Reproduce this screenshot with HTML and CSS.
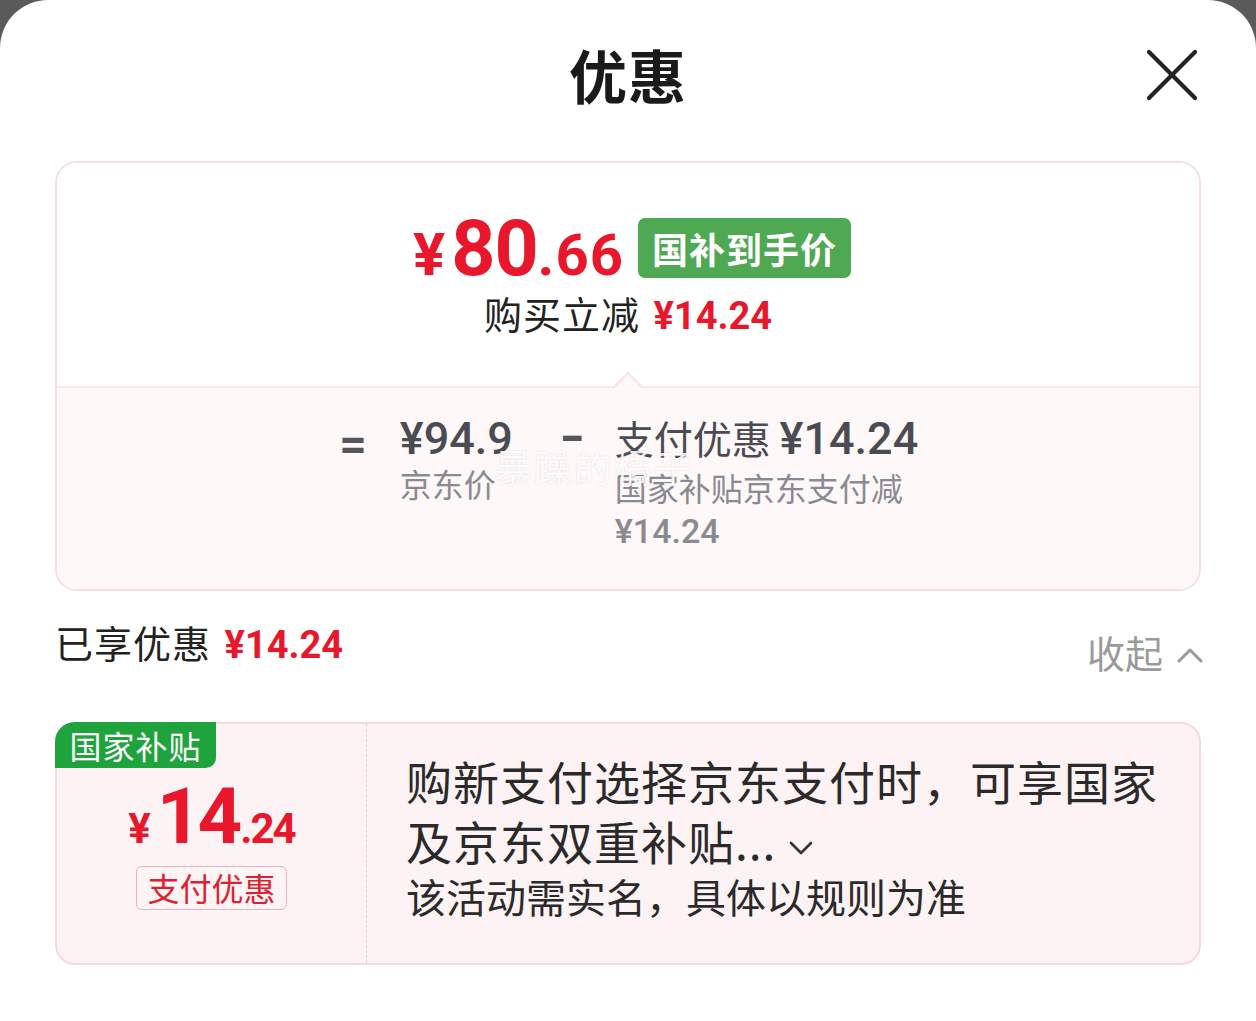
FILE: index.html
```html
<!DOCTYPE html>
<html lang="zh-CN">
<head>
    <meta charset="UTF-8">
    <meta name="viewport" content="width=device-width, initial-scale=1.0">
    <title>优惠</title>
    <link rel="stylesheet" href="styles.css">
</head>
<body>
    <div class="sheet">
        <header class="sheet-head">
            <h1>优惠</h1>
            <button class="close" aria-label="关闭">
                <svg width="52" height="52" viewBox="0 0 52 52"><path d="M3 3 L49 49 M49 3 L3 49" stroke="#222" stroke-width="4.2" stroke-linecap="round" fill="none"/></svg>
            </button>
        </header>

        <section class="summary">
            <div class="summary-top">
                <div class="final-row">
                    <span class="final-price"><span class="yen">¥</span><span class="int">80</span><span class="dec">.66</span></span>
                    <span class="badge-green">国补到手价</span>
                </div>
                <div class="reduce">购买立减 <span class="num red">¥14.24</span></div>
            </div>
            <div class="summary-bottom">
                <span class="notch"></span>
                <div class="formula">
                    <span class="op op-eq">=</span>
                    <div class="term">
                        <div class="term-title"><span class="num">¥94.9</span></div>
                        <div class="term-sub">京东价</div>
                    </div>
                    <span class="op op-minus">-</span>
                    <div class="term term-wide">
                        <div class="term-title">支付优惠 <span class="num">¥14.24</span></div>
                        <div class="term-sub">国家补贴京东支付减</div>
                        <div class="term-sub"><span class="num">¥14.24</span></div>
                    </div>
                </div>
                <span class="watermark">暴躁的橘子</span>
            </div>
        </section>

        <div class="enjoyed">
            <div class="enjoyed-left">已享优惠 <span class="num red">¥14.24</span></div>
            <div class="collapse">收起
                <svg width="26" height="18" viewBox="0 0 26 18"><path d="M2 15 L13 4 L24 15" stroke="#9a9a9a" stroke-width="3" fill="none" stroke-linecap="round" stroke-linejoin="round"/></svg>
            </div>
        </div>

        <section class="coupon">
            <span class="coupon-tag">国家补贴</span>
            <div class="coupon-left">
                <div class="coupon-price"><span class="c-yen">¥</span><span class="c-int">14</span><span class="c-dec">.24</span></div>
                <span class="coupon-type">支付优惠</span>
            </div>
            <div class="coupon-right">
                <p class="coupon-title">购新支付选择京东支付时，可享国家及京东双重补贴...<svg class="more" width="26" height="20" viewBox="0 0 26 20"><path d="M3 5 L13 15 L23 5" stroke="#333" stroke-width="2.6" fill="none" stroke-linecap="round" stroke-linejoin="round"/></svg></p>
                <p class="coupon-note">该活动需实名，具体以规则为准</p>
            </div>
        </section>
    </div>
</body>
</html>
```

FILE: styles.css
```css
/* Base */
* {
    box-sizing: border-box;
    margin: 0;
    padding: 0;
}

body {
    background: #5a5a5a;
    font-family: "Noto Sans CJK SC", "Noto Sans", sans-serif;
    color: #222;
}

.sheet {
    background: #fff;
    border-radius: 48px 48px 0 0;
    height: 1021px;
    padding: 0 55px;
    overflow: hidden;
}

.num {
    font-family: Roboto, "Noto Sans CJK SC", sans-serif;
    font-weight: 700;
}

.red {
    color: #e8172c;
}

/* Header */
.sheet-head {
    height: 150px;
    display: flex;
    align-items: center;
    justify-content: center;
    position: relative;
}

.sheet-head h1 {
    font-size: 58px;
    font-weight: 700;
    color: #1a1a1a;
    letter-spacing: 1px;
    margin-top: -2px;
}

.close {
    position: absolute;
    right: 3px;
    top: 49px;
    border: none;
    background: none;
    width: 52px;
    height: 52px;
}

/* Summary card */
.summary {
    margin-top: 11px;
    border: 2px solid #f8dde2;
    border-radius: 22px;
    overflow: hidden;
}

.summary-top {
    background: #fff;
    padding: 55px 0 47px;
    display: flex;
    flex-direction: column;
    align-items: center;
}

.final-row {
    display: flex;
    align-items: center;
    height: 60px;
    margin-left: 8px;
}

.final-price {
    font-family: Roboto, sans-serif;
    font-weight: 700;
    color: #e8172c;
    display: flex;
    align-items: baseline;
    margin-top: 2px;
}

.final-price .yen {
    font-size: 60px;
    margin-right: 6px;
}

.final-price .int {
    font-size: 77px;
    letter-spacing: -1px;
}

.final-price .dec {
    font-size: 58px;
    letter-spacing: 1px;
}

.badge-green {
    margin-left: 14px;
    background: #4fa852;
    color: #fff;
    font-size: 36px;
    font-weight: 700;
    border-radius: 7px;
    height: 60px;
    line-height: 60px;
    padding: 0 14px;
    letter-spacing: 1px;
}

.reduce {
    margin-top: 12px;
    font-size: 38px;
    line-height: 46px;
    letter-spacing: 1px;
    color: #222;
}

.reduce .num {
    font-size: 38px;
    letter-spacing: 0;
    margin-left: 4px;
}

.summary-bottom {
    position: relative;
    background: #fef8f8;
    border-top: 2px solid #fbe7ea;
    padding: 26px 0 37px;
}

.notch {
    position: absolute;
    left: 50%;
    top: -12px;
    width: 22px;
    height: 22px;
    margin-left: -11px;
    background: #fef8f8;
    border-top: 2px solid #fbe1e6;
    border-left: 2px solid #fbe1e6;
    transform: rotate(45deg);
}

.formula {
    display: flex;
    justify-content: center;
    align-items: flex-start;
    margin-left: 4px;
}

.op {
    font-family: Roboto, sans-serif;
    font-weight: 700;
    font-size: 48px;
    line-height: 46px;
    color: #55555c;
}

.op-eq {
    margin-top: 8px;
    margin-right: 33px;
}

.op-minus {
    margin: 0 33px 0 50px;
    transform: scaleX(1.4);
}

.term-title {
    font-size: 39px;
    line-height: 46px;
    color: #4b4b53;
    white-space: nowrap;
}

.term-title .num {
    font-size: 45px;
    font-weight: 500;
}

.term-sub {
    font-size: 32px;
    line-height: 42px;
    color: #8a8a92;
}

.term-wide .term-title + .term-sub {
    margin-top: 4px;
}

.term-sub .num {
    font-size: 34px;
    font-weight: 500;
}

.term-wide {
    width: 306px;
}

.watermark {
    position: absolute;
    left: 437px;
    top: 50px;
    font-size: 38px;
    color: rgba(255, 255, 255, 0.9);
    text-shadow: 0 0 2px rgba(0, 0, 0, 0.12);
    letter-spacing: 2px;
}

/* Enjoyed row */
.enjoyed {
    margin-top: 21px;
    height: 64px;
    display: flex;
    justify-content: space-between;
    align-items: flex-start;
}

.enjoyed-left {
    font-size: 38px;
    line-height: 60px;
    letter-spacing: 1px;
}

.enjoyed-left .num {
    letter-spacing: 0;
    margin-left: 4px;
}

.collapse {
    font-size: 38px;
    line-height: 60px;
    color: #9a9a9a;
    padding-top: 10px;
    display: flex;
    align-items: center;
    gap: 14px;
    margin-right: -2px;
}

.collapse svg {
    margin-top: 6px;
}

/* Coupon card */
.coupon {
    position: relative;
    margin-top: 46px;
    height: 243px;
    display: flex;
    background: #fdf2f4;
    border: 2px solid #f6d9de;
    border-radius: 20px;
}

.coupon-tag {
    position: absolute;
    left: -2px;
    top: -2px;
    width: 161px;
    height: 46px;
    background: #1fa43d;
    color: #fff;
    font-size: 32px;
    line-height: 46px;
    text-align: center;
    border-radius: 20px 0 10px 0;
    letter-spacing: 1px;
}

.coupon-left {
    width: 310px;
    border-right: 1px dashed #f0cdd3;
    display: flex;
    flex-direction: column;
    align-items: center;
    justify-content: center;
    padding-top: 4px;
}

.coupon-price {
    height: 70px;
    display: flex;
    align-items: baseline;
    font-family: Roboto, sans-serif;
    font-weight: 700;
    color: #e8172c;
    line-height: 70px;
}

.c-yen {
    font-size: 42px;
    margin-right: 6px;
}

.c-int {
    font-size: 78px;
    letter-spacing: -4px;
}

.c-dec {
    font-size: 42px;
    letter-spacing: -2px;
    margin-left: 2px;
}

.coupon-type {
    margin-top: 14px;
    height: 44px;
    line-height: 40px;
    padding: 0 10px;
    border: 1px solid #e9b3b9;
    border-radius: 6px;
    color: #e0202f;
    font-size: 32px;
    background: #fdf4f5;
}

.coupon-right {
    flex: 1;
    padding: 26px 30px 0 39px;
}

.coupon-title {
    font-size: 46px;
    line-height: 60px;
    letter-spacing: 1px;
    color: #2a2a2a;
}

.coupon-title .more {
    margin-left: 12px;
    vertical-align: 2px;
}

.coupon-note {
    font-size: 40px;
    line-height: 52px;
    letter-spacing: 0;
    color: #2a2a2a;
}
```
